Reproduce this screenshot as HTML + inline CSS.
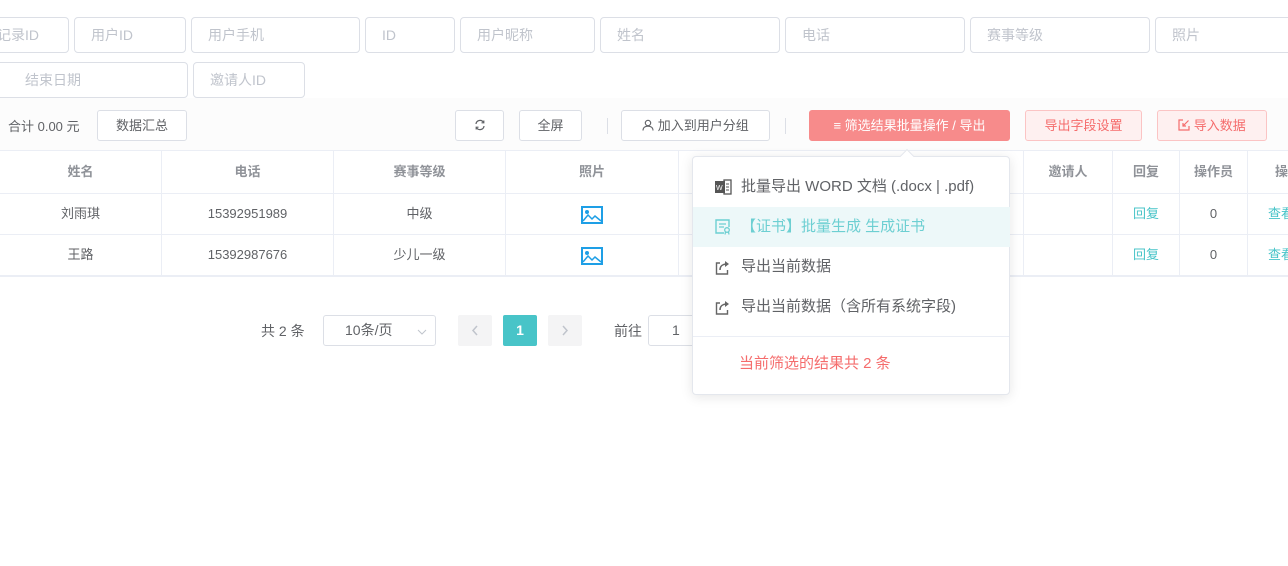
<!DOCTYPE html>
<html><head><meta charset="utf-8">
<style>
*{box-sizing:border-box;margin:0;padding:0}
body{width:1288px;height:566px;background:#fff;position:relative;overflow:hidden;font-family:"Liberation Sans","Noto Sans CJK SC",sans-serif;font-size:14px;color:#606266}
.a{position:absolute}
.in{position:absolute;border:1px solid #dcdfe6;border-radius:4px;height:36px;color:#c0c4cc;padding-left:16px;line-height:34px;font-size:14px;background:#fff}
.btn{position:absolute;top:110px;height:31px;border:1px solid #dcdfe6;border-radius:3px;background:#fff;font-size:13px;color:#606266;text-align:center;line-height:29px}
.th,.td{position:absolute;text-align:center;font-size:13px;border-right:1px solid #ebeef5}
.th{top:151px;height:42px;line-height:42px;color:#909399;font-weight:bold}
.td{height:41px;line-height:41px;color:#606266}
.hl{position:absolute;left:0;width:1288px;height:1px;background:#ebeef5}
.mi{position:absolute;left:0;width:317px;height:40px;line-height:40px;padding-left:48px;font-size:15px;color:#606266}
.mi svg{position:absolute;left:22px;top:12px}
</style></head><body>
<div class="in" style="left:-10px;top:17px;width:79px;padding-left:6px">记录ID</div>
<div class="in" style="left:74px;top:17px;width:112px">用户ID</div>
<div class="in" style="left:191px;top:17px;width:169px">用户手机</div>
<div class="in" style="left:365px;top:17px;width:90px">ID</div>
<div class="in" style="left:460px;top:17px;width:135px">用户昵称</div>
<div class="in" style="left:600px;top:17px;width:180px">姓名</div>
<div class="in" style="left:785px;top:17px;width:180px">电话</div>
<div class="in" style="left:970px;top:17px;width:180px">赛事等级</div>
<div class="in" style="left:1155px;top:17px;width:150px">照片</div>
<div class="in" style="left:-10px;top:62px;width:198px;padding-left:34px">结束日期</div>
<div class="in" style="left:193px;top:62px;width:112px">邀请人ID</div>

<div class="a" style="left:0;top:98px;width:1288px;height:52px;background:#fcfcfc"></div>
<div class="a" style="left:8px;top:116px;font-size:13px;color:#606266">合计 0.00 元</div>
<div class="btn" style="left:97px;width:90px">数据汇总</div>
<div class="btn" style="left:455px;width:49px"><svg width="12" height="12" viewBox="0 0 12 12" style="margin-top:8px"><path d="M2 5A4 4 0 0 1 9.5 3.5M10 7A4 4 0 0 1 2.5 8.5" fill="none" stroke="#606266" stroke-width="1.2"/><path d="M9.8 1.5v2.3H7.5M2.2 10.5V8.2h2.3" fill="none" stroke="#606266" stroke-width="1.2"/></svg></div>
<div class="btn" style="left:519px;width:63px">全屏</div>
<div class="a" style="left:607px;top:118px;width:1px;height:16px;background:#dcdfe6"></div>
<div class="btn" style="left:621px;width:149px"><svg width="12" height="12" viewBox="0 0 12 12" style="vertical-align:-1px"><circle cx="6" cy="4" r="2.7" fill="none" stroke="#606266" stroke-width="1.1"/><path d="M1 11.5c0-3 2.2-4.3 5-4.3s5 1.3 5 4.3" fill="none" stroke="#606266" stroke-width="1.1"/></svg> 加入到用户分组</div>
<div class="a" style="left:785px;top:118px;width:1px;height:16px;background:#dcdfe6"></div>
<div class="btn" style="left:809px;width:201px;background:#f78b8b;border-color:#f78b8b;color:#fff">&#8801; 筛选结果批量操作 / 导出</div>
<div class="btn" style="left:1025px;width:117px;background:#fef0f0;border-color:#fbc4c4;color:#f56c6c">导出字段设置</div>
<div class="btn" style="left:1157px;width:110px;background:#fef0f0;border-color:#fbc4c4;color:#f56c6c"><svg width="12" height="12" viewBox="0 0 12 12" style="vertical-align:-1px"><path d="M5 1H1v10h10V7" fill="none" stroke="#f56c6c" stroke-width="1.2"/><path d="M10.5 1.5L5 7M5 4v3h3" fill="none" stroke="#f56c6c" stroke-width="1.2"/></svg> 导入数据</div>

<div class="hl" style="top:150px"></div>
<div class="hl" style="top:193px"></div>
<div class="hl" style="top:234px"></div>
<div class="hl" style="top:275px;height:2px"></div>
<div class="th" style="left:0;width:162px">姓名</div>
<div class="th" style="left:162px;width:172px">电话</div>
<div class="th" style="left:334px;width:172px">赛事等级</div>
<div class="th" style="left:506px;width:173px">照片</div>
<div class="th" style="left:679px;width:345px"></div>
<div class="th" style="left:1024px;width:89px">邀请人</div>
<div class="th" style="left:1113px;width:67px">回复</div>
<div class="th" style="left:1180px;width:68px">操作员</div>
<div class="th" style="left:1248px;width:80px;border:0">操作</div>
<div class="td" style="left:0;top:193px;width:162px">刘雨琪</div>
<div class="td" style="left:162px;top:193px;width:172px">15392951989</div>
<div class="td" style="left:334px;top:193px;width:172px">中级</div>
<div class="td" style="left:506px;top:193px;width:173px"><svg width="22" height="18" viewBox="0 0 22 18" style="vertical-align:middle"><rect x="1" y="1" width="20" height="16" fill="none" stroke="#1e9fe6" stroke-width="2"/><circle cx="6" cy="6" r="2" fill="#1e9fe6"/><path d="M2 15l5-6 4 4 3-3 6 5" fill="none" stroke="#1e9fe6" stroke-width="1.5"/></svg></div>
<div class="td" style="left:679px;top:193px;width:345px"></div>
<div class="td" style="left:1024px;top:193px;width:89px"></div>
<div class="td" style="left:1113px;top:193px;width:67px;color:#48c4c8">回复</div>
<div class="td" style="left:1180px;top:193px;width:68px">0</div>
<div class="td" style="left:1248px;top:193px;width:80px;color:#48c4c8;border:0;text-align:left;padding-left:20px">查看</div>
<div class="td" style="left:0;top:234px;width:162px">王路</div>
<div class="td" style="left:162px;top:234px;width:172px">15392987676</div>
<div class="td" style="left:334px;top:234px;width:172px">少儿一级</div>
<div class="td" style="left:506px;top:234px;width:173px"><svg width="22" height="18" viewBox="0 0 22 18" style="vertical-align:middle"><rect x="1" y="1" width="20" height="16" fill="none" stroke="#1e9fe6" stroke-width="2"/><circle cx="6" cy="6" r="2" fill="#1e9fe6"/><path d="M2 15l5-6 4 4 3-3 6 5" fill="none" stroke="#1e9fe6" stroke-width="1.5"/></svg></div>
<div class="td" style="left:679px;top:234px;width:345px"></div>
<div class="td" style="left:1024px;top:234px;width:89px"></div>
<div class="td" style="left:1113px;top:234px;width:67px;color:#48c4c8">回复</div>
<div class="td" style="left:1180px;top:234px;width:68px">0</div>
<div class="td" style="left:1248px;top:234px;width:80px;color:#48c4c8;border:0;text-align:left;padding-left:20px">查看</div>

<div class="a" style="left:261px;top:321px;font-size:14px">共 2 条</div>
<div class="a" style="left:323px;top:315px;width:113px;height:31px;border:1px solid #dcdfe6;border-radius:3px;line-height:29px;padding-left:21px;font-size:14px">10条/页<svg width="10" height="6" viewBox="0 0 10 6" style="position:absolute;right:8px;top:13px"><path d="M1 1l4 4 4-4" fill="none" stroke="#c0c4cc" stroke-width="1"/></svg></div>
<div class="a" style="left:458px;top:315px;width:34px;height:31px;background:#f4f4f5;border-radius:2px"><svg width="34" height="31"><path d="M19 11l-4 4.5 4 4.5" fill="none" stroke="#c0c4cc" stroke-width="1.5"/></svg></div>
<div class="a" style="left:503px;top:315px;width:34px;height:31px;background:#48c4c8;color:#fff;text-align:center;line-height:31px;font-weight:bold;border-radius:2px">1</div>
<div class="a" style="left:548px;top:315px;width:34px;height:31px;background:#f4f4f5;border-radius:2px"><svg width="34" height="31"><path d="M15 11l4 4.5-4 4.5" fill="none" stroke="#c0c4cc" stroke-width="1.5"/></svg></div>
<div class="a" style="left:614px;top:321px">前往</div>
<div class="a" style="left:648px;top:315px;width:60px;height:31px;border:1px solid #dcdfe6;border-radius:3px;line-height:29px;padding-left:23px">1</div>

<div class="a" style="left:692px;top:156px;width:318px;height:239px;background:#fff;border:1px solid #e4e7ed;border-radius:4px;box-shadow:0 2px 12px rgba(0,0,0,.1)">
<div class="a" style="left:209px;top:-6px;width:10px;height:10px;background:#fff;border-left:1px solid #e4e7ed;border-top:1px solid #e4e7ed;transform:rotate(45deg)"></div>
<div class="mi" style="top:10px"><svg width="17" height="16" viewBox="0 0 17 16"><rect x="0" y="2" width="10" height="12" fill="#555"/><rect x="9" y="1" width="7" height="14" fill="none" stroke="#555" stroke-width="1.3"/><path d="M11 5h3M11 8h3M11 11h3" stroke="#555" stroke-width="1"/><text x="1" y="11" font-size="7" fill="#fff" font-family="Liberation Sans">W</text></svg>批量导出 WORD 文档 (.docx | .pdf)</div>
<div class="mi" style="top:50px;background:#edf8f9;color:#6dcfd2"><svg width="16" height="16" viewBox="0 0 16 16"><path d="M9 14H1V1h13v7" fill="none" stroke="#6dcfd2" stroke-width="1.4"/><path d="M4 5h7M4 8h5" stroke="#6dcfd2" stroke-width="1.3"/><circle cx="12" cy="11" r="2.3" fill="none" stroke="#6dcfd2" stroke-width="1.3"/><path d="M10.5 13l-.5 2.5M13.5 13l.5 2.5" stroke="#6dcfd2" stroke-width="1.2"/></svg>【证书】批量生成 生成证书</div>
<div class="mi" style="top:90px"><svg width="16" height="16" viewBox="0 0 16 16"><path d="M5 4H1.5v11h11v-4" fill="none" stroke="#666" stroke-width="1.4"/><path d="M5 11c0-4 3-6 7-6" fill="none" stroke="#666" stroke-width="1.6"/><path d="M10 2l4 3-4 3z" fill="#666"/></svg>导出当前数据</div>
<div class="mi" style="top:130px"><svg width="16" height="16" viewBox="0 0 16 16"><path d="M5 4H1.5v11h11v-4" fill="none" stroke="#666" stroke-width="1.4"/><path d="M5 11c0-4 3-6 7-6" fill="none" stroke="#666" stroke-width="1.6"/><path d="M10 2l4 3-4 3z" fill="#666"/></svg>导出当前数据（含所有系统字段)</div>
<div class="a" style="left:0;top:179px;width:316px;height:1px;background:#ebeef5"></div>
<div class="a" style="left:46px;top:195px;font-size:15px;color:#f56c6c">当前筛选的结果共 2 条</div>
</div>
</body></html>
